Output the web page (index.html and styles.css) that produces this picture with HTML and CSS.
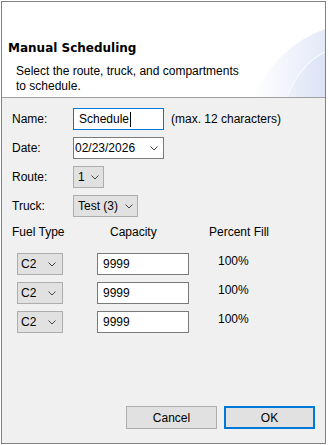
FILE: index.html
```html
<!DOCTYPE html>
<html>
<head>
<meta charset="utf-8">
<link rel="stylesheet" href="styles.css">
</head>
<body>
<div class="dialog">
  <div class="header">
    <svg class="swoosh" width="323" height="95" viewBox="0 0 323 95">
      <defs>
        <linearGradient id="g1" x1="250" y1="0" x2="323" y2="0" gradientUnits="userSpaceOnUse">
          <stop offset="0" stop-color="#ffffff"/>
          <stop offset="1" stop-color="#e4e9f8"/>
        </linearGradient>
        <linearGradient id="g2" x1="286" y1="0" x2="323" y2="0" gradientUnits="userSpaceOnUse">
          <stop offset="0" stop-color="#eef1fb"/>
          <stop offset="1" stop-color="#dbe2f5"/>
        </linearGradient>
      </defs>
      <path d="M250 95 Q276 44 323 27 L323 95 Z" fill="url(#g1)"/>
      <path d="M285 95 Q298 62 323 50 L323 95 Z" fill="url(#g2)"/>
      <path d="M285 95 Q298 62 323 50" fill="none" stroke="#f7f9fe" stroke-width="1.2"/>
    </svg>
    <div class="title">Manual Scheduling</div>
    <div class="subtitle">Select the route, truck, and compartments<br>to schedule.</div>
  </div>
  <div class="body">
    <div class="form">
      <div class="row">
        <span class="label">Name:</span>
        <div class="textbox focused">Schedule<span class="caret"></span></div>
        <span class="hint">(max. 12 characters)</span>
      </div>
      <div class="row">
        <span class="label">Date:</span>
        <div class="datebox"><span>02/23/2026</span><svg class="chev" width="8" height="5" viewBox="0 0 8 5"><polyline points="0.5,0.5 4,4 7.5,0.5" fill="none" stroke="#444" stroke-width="1"/></svg></div>
      </div>
      <div class="row">
        <span class="label">Route:</span>
        <div class="combo route"><span>1</span><svg class="chev" width="8" height="5" viewBox="0 0 8 5"><polyline points="0.5,0.5 4,4 7.5,0.5" fill="none" stroke="#444" stroke-width="1"/></svg></div>
      </div>
      <div class="row">
        <span class="label">Truck:</span>
        <div class="combo truck"><span>Test (3)</span><svg class="chev" width="8" height="5" viewBox="0 0 8 5"><polyline points="0.5,0.5 4,4 7.5,0.5" fill="none" stroke="#444" stroke-width="1"/></svg></div>
      </div>
      <div class="grid-head">
        <span class="h-fuel">Fuel Type</span>
        <span class="h-cap">Capacity</span>
        <span class="h-pct">Percent Fill</span>
      </div>
      <div class="fuel-rows">
        <div class="fuel-row">
          <div class="combo fuel"><span>C2</span><svg class="chev" width="8" height="5" viewBox="0 0 8 5"><polyline points="0.5,0.5 4,4 7.5,0.5" fill="none" stroke="#444" stroke-width="1"/></svg></div>
          <div class="textbox cap">9999</div>
          <span class="pct">100%</span>
        </div>
        <div class="fuel-row">
          <div class="combo fuel"><span>C2</span><svg class="chev" width="8" height="5" viewBox="0 0 8 5"><polyline points="0.5,0.5 4,4 7.5,0.5" fill="none" stroke="#444" stroke-width="1"/></svg></div>
          <div class="textbox cap">9999</div>
          <span class="pct">100%</span>
        </div>
        <div class="fuel-row">
          <div class="combo fuel"><span>C2</span><svg class="chev" width="8" height="5" viewBox="0 0 8 5"><polyline points="0.5,0.5 4,4 7.5,0.5" fill="none" stroke="#444" stroke-width="1"/></svg></div>
          <div class="textbox cap">9999</div>
          <span class="pct">100%</span>
        </div>
      </div>
    </div>
    <div class="buttons">
      <button class="btn">Cancel</button>
      <button class="btn ok">OK</button>
    </div>
  </div>
</div>
</body>
</html>
```

FILE: styles.css
```css
html, body {
  margin: 0;
  padding: 0;
  background: #ffffff;
}
body {
  font-family: "Liberation Sans", Arial, sans-serif;
  font-size: 12px;
  color: #000;
}
.dialog {
  margin: 1px 0 0 1px;
  width: 325px;
  height: 443px;
  box-sizing: border-box;
  border: 1px solid #828282;
  display: flex;
  flex-direction: column;
  background: #f0f0f0;
}
.header {
  position: relative;
  height: 95px;
  background: #ffffff;
  border-bottom: 1px solid #a0a0a0;
  flex: none;
  overflow: hidden;
}
.swoosh {
  position: absolute;
  left: 0;
  top: 0;
}
.title {
  position: relative;
  padding: 39px 0 0 6px;
  font-family: "DejaVu Sans", Verdana, sans-serif;
  font-weight: bold;
  font-size: 12px;
  line-height: 15px;
}
.subtitle {
  position: relative;
  margin-top: 8px;
  padding-left: 14px;
  line-height: 15px;
}
.body {
  flex: 1;
  display: flex;
  flex-direction: column;
  justify-content: space-between;
  padding: 10px 10px 14px 10px;
}
.row {
  display: flex;
  align-items: center;
  height: 22px;
  margin-bottom: 7px;
}
.label {
  width: 61px;
  flex: none;
}
.textbox {
  box-sizing: border-box;
  height: 22px;
  background: #fff;
  border: 1px solid #7a7a7a;
  display: flex;
  align-items: center;
  line-height: 16px;
}
.textbox.focused {
  width: 91px;
  border-color: #0078d7;
  padding-left: 5px;
}
.caret {
  display: inline-block;
  width: 1px;
  height: 15px;
  background: #000;
  margin-left: 1px;
}
.hint {
  margin-left: 7px;
}
.datebox {
  box-sizing: border-box;
  width: 91px;
  height: 22px;
  background: #fff;
  border: 1px solid #7a7a7a;
  display: flex;
  align-items: center;
  justify-content: space-between;
  padding: 0 5px 0 1px;
}
.combo {
  box-sizing: border-box;
  height: 22px;
  background: #e1e1e1;
  border: 1px solid #adadad;
  display: flex;
  align-items: center;
  justify-content: space-between;
  padding: 0 4px 0 4px;
}
.chev {
  display: block;
  flex: none;
}
.combo.route {
  width: 31px;
}
.combo.truck {
  width: 65px;
}
.grid-head {
  display: flex;
  height: 16px;
  line-height: 16px;
  margin-bottom: 13px;
}
.h-fuel {
  width: 98px;
}
.h-cap {
  width: 99px;
}
.fuel-rows {
  display: flex;
  flex-direction: column;
  gap: 7px;
}
.fuel-row {
  display: flex;
  align-items: flex-start;
  height: 22px;
  padding-left: 5px;
}
.combo.fuel {
  width: 46px;
  padding-left: 3px;
  padding-right: 6px;
}
.textbox.cap {
  width: 92px;
  margin-left: 34px;
  padding-left: 5px;
}
.pct {
  margin-left: 29px;
  line-height: 16px;
}
.buttons {
  display: flex;
  justify-content: flex-end;
  gap: 7px;
}
.btn {
  box-sizing: border-box;
  width: 91px;
  height: 23px;
  margin: 0;
  padding: 0;
  background: #e1e1e1;
  border: 1px solid #adadad;
  font-family: "Liberation Sans", Arial, sans-serif;
  font-size: 12px;
  color: #000;
}
.btn.ok {
  border: 2px solid #0078d7;
}
```
